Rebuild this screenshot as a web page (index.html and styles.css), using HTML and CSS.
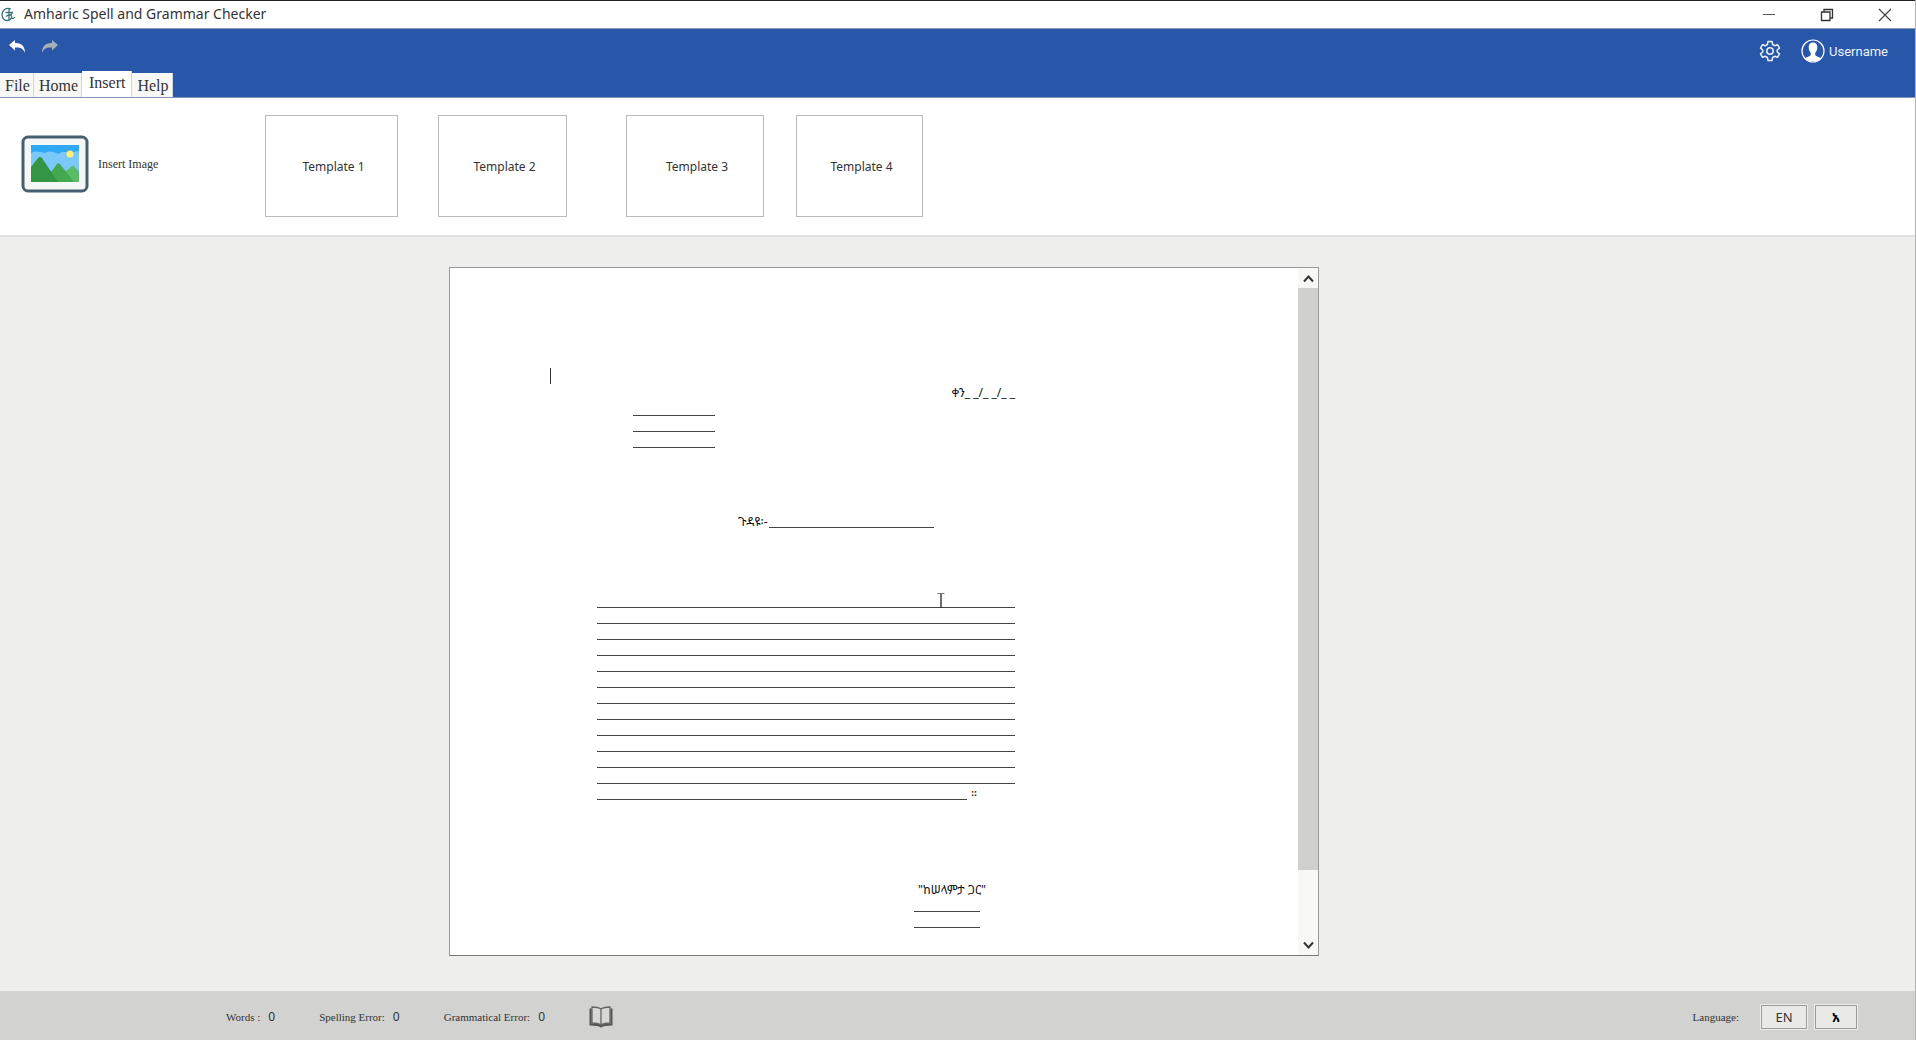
FILE: index.html
```html
<!DOCTYPE html>
<html lang="en">
<head>
<meta charset="utf-8">
<title>Amharic Spell and Grammar Checker</title>
<link rel="stylesheet" href="styles.css">
</head>
<body>
<div class="app">
  <header class="titlebar">
    <svg class="logo" width="15" height="16" viewBox="0 0 15 16" fill="none" stroke="#3c7480" stroke-width="1.300"><path d="M10 2C5 0 1 3.500 1 8s4 6.500 7.500 5"/><path d="M4.500 5.500h6M8 1.500v11.500M5 9.500c2.500-2 5-2 5.500-.5s-.5 3.500-2.500 4M11 4.500c1 1.500-1 3.500-2.500 4M10 10.500c1.500 1.500 3 1 4-.5"/></svg>
    <h1 class="title">Amharic Spell and Grammar Checker</h1>
    <div class="window-controls">
      <button class="icon-button" aria-label="Minimize"><svg width="14" height="14" viewBox="0 0 14 14" stroke="#555" fill="none"><path d="M1 6.500h12"/></svg></button>
      <button class="icon-button" aria-label="Restore"><svg width="14" height="14" viewBox="0 0 14 14" stroke="#333" fill="none" stroke-width="1.3"><path d="M1.500 4h8.500v8.500H1.500zM4 4V1.500h8.500V10H10"/></svg></button>
      <button class="icon-button" aria-label="Close"><svg width="14" height="14" viewBox="0 0 14 14" stroke="#444" fill="none" stroke-width="1.2"><path d="M1 1l12 12M13 1L1 13"/></svg></button>
    </div>
  </header>

  <div class="banner">
    <div class="banner-left">
      <div class="history">
        <button class="icon-button" aria-label="Undo"><svg width="17" height="14" viewBox="0 0 17 14" fill="#fff"><path d="M0 5L6 0v3c6-.5 10 3 10 10-1.500-4-4-6-10-5.500v3z"/></svg></button>
        <button class="icon-button" aria-label="Redo"><svg width="17" height="14" viewBox="0 0 17 14" fill="#a9afb8"><path d="M16 5L10 0v3C4 2.500 0 6 0 13c1.500-4 4-6 10-5.500v3z"/></svg></button>
      </div>
      <nav class="tabs">
        <button class="tab">File</button>
        <button class="tab">Home</button>
        <button class="tab tab-active">Insert</button>
        <button class="tab">Help</button>
      </nav>
    </div>
    <div class="account">
      <button class="icon-button" aria-label="Settings"><svg width="22" height="22" viewBox="0 0 22 22" fill="none" stroke="#e8eef8" stroke-width="1.500" stroke-linejoin="round"><path d="M9 1.500h4l.6 3 2 1.200 2.900-1 2 3.400L18.200 10v2l2.300 1.900-2 3.400-2.900-1-2 1.200-.6 3H9l-.6-3-2-1.200-2.900 1-2-3.400L3.800 12v-2L1.500 8.100l2-3.400 2.900 1 2-1.200z"/><circle cx="11" cy="11" r="3.200"/></svg></button>
      <button class="user">
        <svg width="24" height="24" viewBox="0 0 24 24"><circle cx="12" cy="12" r="11" fill="none" stroke="#fff" stroke-width="1.200"/><path fill="#fff" d="M12 3.500c-3 0-4.500 2-4.300 5 .1 2.600 1 4 2 5.200v2.600c-1 1.200-3.800 1.500-5.500 3A11 11 0 0 0 19.800 19.300c-1.700-1.500-4.500-1.800-5.500-3v-2.600c1-1.200 1.900-2.600 2-5.200.2-3-1.300-5-4.300-5z"/></svg>
        <span>Username</span>
      </button>
    </div>
  </div>

  <section class="ribbon">
    <button class="insert-image">
      <svg width="68" height="58" viewBox="0 0 68 58"><rect x="2" y="2" width="64" height="54" rx="5" fill="#f5f6f6" stroke="#466070" stroke-width="3"/><path fill="#2fa8f6" d="M10 10h48v37H10z"/><path fill="#7cc8fb" d="M10 18c5-3 9-1 14 0 6-3 9-1 13 1 6-4 9 0 21-3v20H10z"/><circle cx="49" cy="19" r="3.500" fill="#fff176"/><path fill="#5bbb67" d="M42 47V39l9-8q1-1 2 0l5 6v10z"/><path fill="#44a850" d="M23 47l13-18q1.500-1.500 3 0l14 18z"/><path fill="#349644" d="M10 47V32l7-9q2-2 4 0l16 24z"/></svg>
      <span>Insert Image</span>
    </button>
    <div class="templates">
      <button class="template">Template 1</button>
      <button class="template">Template 2</button>
      <button class="template">Template 3</button>
      <button class="template">Template 4</button>
    </div>
  </section>

  <main class="workspace">
    <div class="editor">
      <article class="sheet" lang="am">
        <div class="caret"></div>
        <p class="date">ቀን_ _/_ _/_ _</p>
        <div class="address"><i class="rule"></i><i class="rule"></i><i class="rule"></i></div>
        <p class="subject">ጉዳዩ፡-<i class="rule subject-rule"></i></p>
        <div class="body-lines">
          <i class="rule"></i><i class="rule"></i><i class="rule"></i><i class="rule"></i>
          <i class="rule"></i><i class="rule"></i><i class="rule"></i><i class="rule"></i>
          <i class="rule"></i><i class="rule"></i><i class="rule"></i><i class="rule"></i>
          <p class="last-line"><i class="rule"></i><span>።</span></p>
          <svg class="pointer" width="8" height="16" viewBox="0 0 8 16" fill="none" stroke="#222"><path d="M.5 1.500h7" stroke="#777"/><path d="M4 2v14" stroke-width="1.300"/></svg>
        </div>
        <div class="closing">
          <p>"ከሠላምታ ጋር"</p>
          <i class="rule"></i><i class="rule"></i>
        </div>
      </article>
      <div class="scrollbar">
        <button class="scroll-button" aria-label="Scroll up"><svg width="11" height="9" viewBox="0 0 11 9" fill="none" stroke="#333" stroke-width="2"><path d="M1 7.500l4.500-5 4.500 5"/></svg></button>
        <div class="track"><div class="thumb"></div></div>
        <button class="scroll-button" aria-label="Scroll down"><svg width="11" height="9" viewBox="0 0 11 9" fill="none" stroke="#333" stroke-width="2"><path d="M1 1.500l4.500 5 4.500-5"/></svg></button>
      </div>
    </div>
  </main>

  <footer class="statusbar">
    <div class="stats">
      <span class="stat">Words : <b class="count">0</b></span>
      <span class="stat">Spelling Error: <b class="count">0</b></span>
      <span class="stat">Grammatical Error: <b class="count">0</b></span>
      <button class="icon-button" aria-label="Dictionary"><svg width="24" height="22" viewBox="0 0 24 22" fill="none" stroke="#666"><path fill="#d8d8d6" stroke-width="1.300" d="M12 3C9 1 6 1 3 1v16c3 0 6 0 9 2 3-2 6-2 9-2V1c-3 0-6 0-9 2zM12 3v16"/><path stroke="#555" stroke-width="2" d="M1.500 2.500v16c4 0 8 0 10.500 2 2.500-2 6.500-2 10.500-2v-16"/></svg></button>
    </div>
    <div class="language">
      <span class="language-label">Language:</span>
      <button class="lang-button lang-en">EN</button>
      <button class="lang-button lang-am" lang="am">አ</button>
    </div>
  </footer>
</div>
</body>
</html>
```
FILE: styles.css
```css
* { box-sizing: border-box; }

body { margin: 0; }

p, h1 { margin: 0; }

button {
  margin: 0;
  padding: 0;
  border: 0;
  background: none;
  font: inherit;
  color: inherit;
}

.app {
  display: flex;
  flex-direction: column;
  min-height: 100vh;
  border-right: 1px solid #b5b5b5;
  background: #eeeeec;
  color: #333;
  font-family: "Noto Sans", "Noto Sans Ethiopic", sans-serif;
}

.icon-button { display: flex; align-items: center; justify-content: center; }

/* Title bar */
.titlebar {
  display: flex;
  align-items: center;
  height: 29px;
  padding-left: 1px;
  border-top: 1px solid #222;
  border-bottom: 1px solid #8b9bb8;
  background: #fff;
}

.title {
  flex: 1;
  padding: 0 0 1px 8px;
  font-size: 14px;
  font-weight: 400;
  line-height: 20px;
}

.window-controls { display: flex; gap: 44px; padding-right: 23px; }

/* Blue banner with tabs */
.banner {
  display: flex;
  justify-content: space-between;
  height: 69px;
  border-bottom: 1px solid #8296ba;
  background: #2857aa;
}

.banner-left { display: flex; flex-direction: column; justify-content: space-between; }

.history { display: flex; gap: 16px; padding: 11px 0 0 9px; }

.tabs { display: flex; align-items: flex-end; }

.tab {
  height: 24px;
  padding: 2px 3px 0 5px;
  border-right: 1px solid #d4d4d4;
  background: #f8f8f7;
  font-family: "Liberation Serif", serif;
  font-size: 16px;
  line-height: 22px;
}

.tab-active { height: 26px; padding: 0 6px 2px 7px; background: #fff; }

.account {
  display: flex;
  align-items: center;
  align-self: flex-start;
  gap: 20px;
  padding: 10px 27px 0 0;
}

.user {
  display: flex;
  align-items: center;
  gap: 4px;
  color: #eef2fa;
  font-family: Roboto, sans-serif;
  font-size: 13px;
}

/* Ribbon */
.ribbon {
  display: flex;
  align-items: flex-start;
  height: 139px;
  padding: 17px 0 0 21px;
  border-bottom: 2px solid #e2e2e2;
  background: #fff;
}

.insert-image {
  display: flex;
  align-items: center;
  gap: 9px;
  width: 244px;
  height: 98px;
  font-family: "Liberation Serif", serif;
  font-size: 12px;
}

.templates {
  display: grid;
  grid-template-columns: 133px 129px 138px 127px;
  column-gap: 40px;
}

.template {
  height: 102px;
  padding-left: 4px;
  border: 1px solid #bbb;
  font-size: 12px;
}

.template:nth-child(3) { margin: 0 -19px 0 19px; }
.template:nth-child(4) { margin-left: 11px; margin-right: -11px; }

/* Document */
.workspace {
  display: flex;
  flex: 1;
  padding: 30px 32px 35px 449px;
}

.editor {
  display: flex;
  flex: 1;
  max-width: 870px;
  border: 1px solid #999;
  border-bottom-color: #777;
  background: #fff;
}

.sheet {
  flex: 1;
  padding: 100px 283px 0 100px;
  font-size: 12px;
  line-height: 16px;
  color: #111;
}

.rule {
  display: block;
  height: 16px;
  border-bottom: 1px solid #444;
}

.caret { width: 1px; height: 16px; background: #333; }

.date { padding-top: 2px; line-height: 14px; text-align: right; }

.address { width: 82px; margin-left: 83px; }

.subject {
  display: flex;
  gap: 1px;
  margin: 64px 0 0 188px;
  line-height: 20px;
}

.subject-rule { width: 165px; }

.body-lines { position: relative; margin: 60px 0 0 47px; }

.last-line { display: flex; gap: 4px; height: 16px; line-height: 20px; }

.last-line .rule { width: 370px; }

.pointer { position: absolute; left: 340px; top: 0; }

.closing { margin: 80px 0 0 364px; }

.closing p { height: 16px; padding-left: 4px; line-height: 20px; white-space: nowrap; }

.closing .rule { width: 66px; }

.scrollbar {
  display: flex;
  flex-direction: column;
  width: 20px;
  background: #f8f8f7;
}

.scroll-button {
  display: flex;
  align-items: center;
  justify-content: center;
  height: 20px;
}

.track { flex: 1; }

.thumb { height: 90%; background: #d0d0cf; }

/* Status bar */
.statusbar {
  display: flex;
  align-items: center;
  justify-content: space-between;
  height: 49px;
  padding: 2px 58px 0 226px;
  background: #d2d2d0;
  font-family: "Liberation Serif", serif;
  font-size: 11px;
}

.stats { display: flex; align-items: center; gap: 44px; }

.stat { display: flex; align-items: center; gap: 8px; }

.count {
  font-family: "Noto Sans", sans-serif;
  font-size: 12px;
  font-weight: 400;
  line-height: 16px;
}

.language { display: flex; align-items: center; gap: 8px; }

.language-label { margin-right: 14px; }

.lang-button {
  width: 46px;
  height: 24px;
  border: 1px solid #999;
  outline: 1px solid #eee;
  background: #e9e9e7;
  font-family: "Noto Sans", "Noto Sans Ethiopic", sans-serif;
  font-size: 13px;
}

.lang-am { width: 42px; color: #000; font-weight: 700; }
```
